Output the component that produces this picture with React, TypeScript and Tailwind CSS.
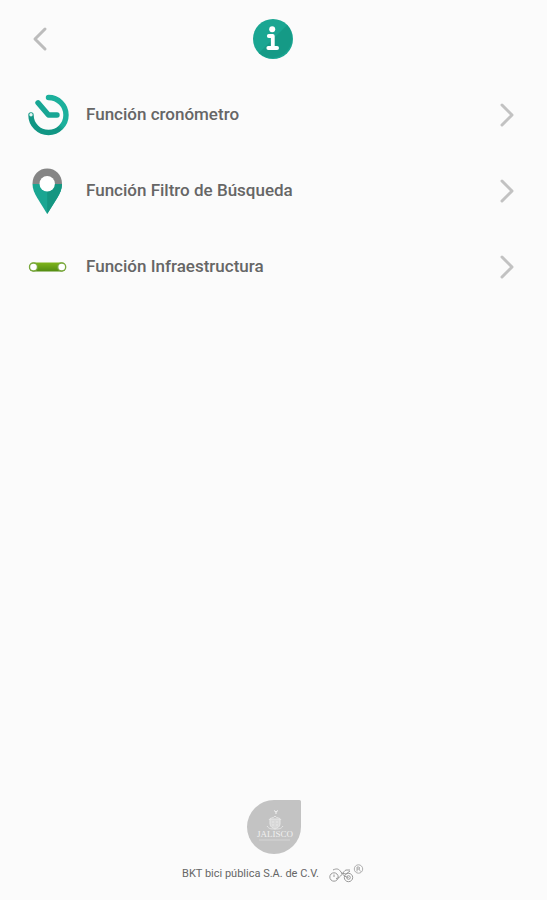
import { ChevronLeft, ChevronRight } from "lucide-react";

function InfoIcon() {
  return (
    <svg width="40" height="40" viewBox="0 0 40 40" aria-hidden="true">
      <circle cx="20" cy="20" r="20" fill="#1aa692" />
      <path d="M34.1 5.9A20 20 0 0 1 5.9 34.1Z" fill="#159a86" />
      <circle cx="19.2" cy="10.2" r="3" fill="#fff" />
      <path
        d="M15.8 17h4v12M15.3 29h8.8"
        fill="none"
        stroke="#fff"
        strokeWidth="3.8"
        strokeLinecap="round"
        strokeLinejoin="round"
      />
    </svg>
  );
}

function TimerIcon() {
  return (
    <svg width="42" height="42" viewBox="0 0 42 42" aria-hidden="true">
      <defs>
        <linearGradient id="timer" x1="0" y1="1" x2="1" y2="0">
          <stop offset="0.45" stopColor="#119684" />
          <stop offset="0.55" stopColor="#1cb09c" />
        </linearGradient>
      </defs>
      <g fill="none" strokeLinecap="round" strokeLinejoin="round">
        <path d="M20.5 3.5A17.5 17.5 0 1 1 3 21" stroke="url(#timer)" strokeWidth="5.4" />
        <path d="M10 8.800L20.500 21h8.500" stroke="#18a694" strokeWidth="5.4" />
      </g>
      <circle cx="3" cy="20.8" r="1.7" fill="#e4f6f3" />
    </svg>
  );
}

function PinIcon() {
  return (
    <svg width="42" height="46" viewBox="0 0 42 46" aria-hidden="true">
      <path d="M4.5 16C4.5 6.5 11 .5 19.2.5S34 6.5 34 16Z" fill="#858585" />
      <path d="M4.5 16H34c0 5-2.2 9.5-4.5 13.5L19.2 46 9 29.5C6.7 25.5 4.5 21 4.5 16Z" fill="#1aa692" />
      <path d="M19.2 16H34c0 5-2.2 9.5-4.5 13.5L19.2 46Z" fill="#149681" />
      <circle cx="19.2" cy="15.7" r="7.7" fill="#fff" />
    </svg>
  );
}

function LaneIcon() {
  return (
    <svg width="42" height="12" viewBox="0 0 42 12" aria-hidden="true">
      <defs>
        <linearGradient id="lane" x1="0" y1="0" x2="0" y2="1">
          <stop offset="0" stopColor="#7fb51b" />
          <stop offset="1" stopColor="#528b12" />
        </linearGradient>
      </defs>
      <rect x="1" y="1.5" width="37" height="9" rx="4.5" fill="url(#lane)" />
      <circle cx="5.5" cy="6" r="4.7" fill="#79a83d" />
      <circle cx="33.7" cy="6" r="4.7" fill="#79a83d" />
      <circle cx="5.5" cy="6" r="3.3" fill="#fff" />
      <circle cx="33.7" cy="6" r="3.3" fill="#fff" />
    </svg>
  );
}

function JaliscoLogo() {
  return (
    <svg width="54" height="54" viewBox="0 0 54 54" role="img" aria-label="Jalisco">
      <path d="M27 0H52.5Q54 0 54 1.5V27A27 27 0 1 1 27 0Z" fill="#c3c3c3" />
      <g fill="none" stroke="#e6e6e6" strokeWidth="1">
        <path d="M27 10.5l2 1.500 2-1.500M29 12v2" stroke="#f4f4f4" />
        <path d="M23 19h10v5c0 3-3 4-5 5-2-1-5-2-5-5Z" fill="#d8d8d8" />
        <path d="M22 20c1-3 4-1 6-4 2 3 5 1 6 4M20 26c2 3 4 3 8 3s6 0 8-3M25 22h2M29 22h2M25 25h2M29 25h2" />
        <path d="M12 40h31" strokeWidth="0.5" />
      </g>
      <text x="28" y="37" textAnchor="middle" fontFamily="Liberation Serif, serif" fontSize="9" fill="#f0f0f0">
        JALISCO
      </text>
    </svg>
  );
}

function BikeLogo() {
  return (
    <svg width="36" height="20" viewBox="0 0 36 20" fill="none" stroke="#9a9a9a" aria-hidden="true">
      <circle cx="5" cy="13" r="4.2" />
      <circle cx="19.5" cy="13.5" r="4.2" />
      <circle cx="19.5" cy="13.5" r="1.8" />
      <path d="M5 13v-2.500M4 6c4-2 6-1 8 2s4 5 7.500 5.500M7 14.500c5 0 7-7.500 10-8.500h4M12 9l5 1 4-3" />
      <circle cx="29.5" cy="5" r="4.2" strokeWidth="0.8" />
      <path d="M28 7.500V3h2q1.500 1 0 2h-2M30 5l1.500 2.500" strokeWidth="0.8" />
    </svg>
  );
}

export default function App() {
  const items = [
    { label: "Función cronómetro", icon: <TimerIcon /> },
    { label: "Función Filtro de Búsqueda", icon: <PinIcon /> },
    { label: "Función Infraestructura", icon: <LaneIcon /> },
  ];

  return (
    <div className="flex min-h-screen flex-col bg-[#fbfbfb] font-[Roboto,sans-serif] text-[#666666]">

      {/* HEADER */}
      <header className="grid grid-cols-3 items-center px-6 pt-[19px] pb-[18px]">
        <button aria-label="Regresar" className="w-8 cursor-pointer text-[#bcbcbc]">
          <ChevronLeft size={40} strokeWidth={3} absoluteStrokeWidth className="-mx-1" />
        </button>
        <div className="flex justify-center">
          <InfoIcon />
        </div>
      </header>

      {/* MENU */}
      <nav>
        {items.map((item) => (
          <a key={item.label} href="#" className="flex h-19 items-center pr-6 pl-7">
            <span className="w-[58px] shrink-0">{item.icon}</span>
            <span className="grow text-[17px] font-medium">{item.label}</span>
            <ChevronRight size={40} strokeWidth={3} absoluteStrokeWidth className="-mx-1 text-[#c2c2c2]" />
          </a>
        ))}
      </nav>

      {/* FOOTER */}
      <footer className="mt-auto flex flex-col items-center gap-2.5 pb-4">
        <JaliscoLogo />
        <div className="flex items-center gap-2.5">
          <p className="text-[11px] leading-5">BKT bici pública S.A. de C.V.</p>
          <BikeLogo />
        </div>
      </footer>

    </div>
  );
}
